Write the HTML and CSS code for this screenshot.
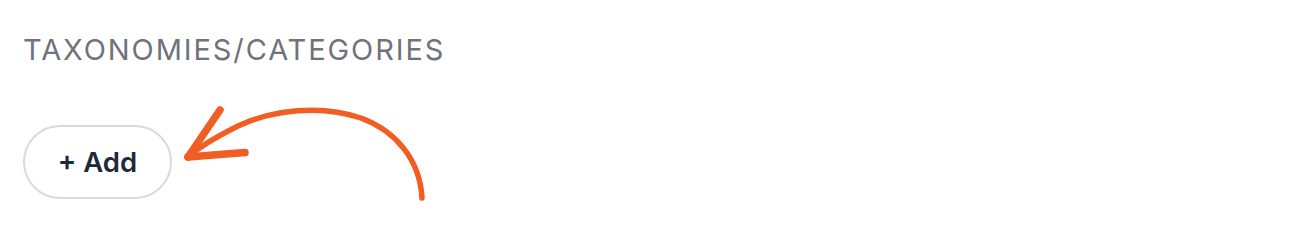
FILE: index.html
```html
<!DOCTYPE html>
<html lang="en">
<head>
<meta charset="utf-8">
<title>Taxonomies</title>
<link rel="stylesheet" href="styles.css">
</head>
<body>
<main class="panel">
  <h2 class="label">TAXONOMIES/CATEGORIES</h2>
  <div class="actions">
    <button class="add-btn" type="button">+ Add</button>
  </div>
  <svg class="arrow" width="1300" height="240" viewBox="0 0 1300 240" aria-hidden="true">
    <g fill="none" stroke="#f15d22" stroke-linecap="round" stroke-linejoin="round">
      <path d="M422 198 C 420 160, 396 131, 361 118 C 320 104, 272 110, 238 126 C 216 137, 199 147, 188 157" stroke-width="5.5"/>
      <path d="M220 110 L 188 157" stroke-width="7.5"/>
      <path d="M188 157 L 245 152.5" stroke-width="7.5"/>
    </g>
  </svg>
</main>
</body>
</html>
```

FILE: styles.css
```css
html, body {
  margin: 0;
  padding: 0;
  background: #ffffff;
}

.panel {
  position: relative;
  width: 1300px;
  height: 240px;
  padding: 32px 0 0 23px;
  box-sizing: border-box;
  font-family: Inter, "Liberation Sans", sans-serif;
}

.label {
  margin: 0;
  font-size: 29px;
  font-weight: 400;
  line-height: 36px;
  color: #6f737b;
  letter-spacing: 1.9px;
}

.actions {
  display: flex;
  margin-top: 57px;
}

.add-btn {
  display: inline-flex;
  align-items: center;
  justify-content: center;
  width: 149px;
  height: 74px;
  border: 2px solid #d7dae1;
  border-radius: 37px;
  background: #ffffff;
  font-family: Inter, "Liberation Sans", sans-serif;
  font-size: 27.5px;
  font-weight: 560;
  color: #1e293b;
  padding: 0;
  cursor: pointer;
}

.arrow {
  position: absolute;
  left: 0;
  top: 0;
  pointer-events: none;
}
```
